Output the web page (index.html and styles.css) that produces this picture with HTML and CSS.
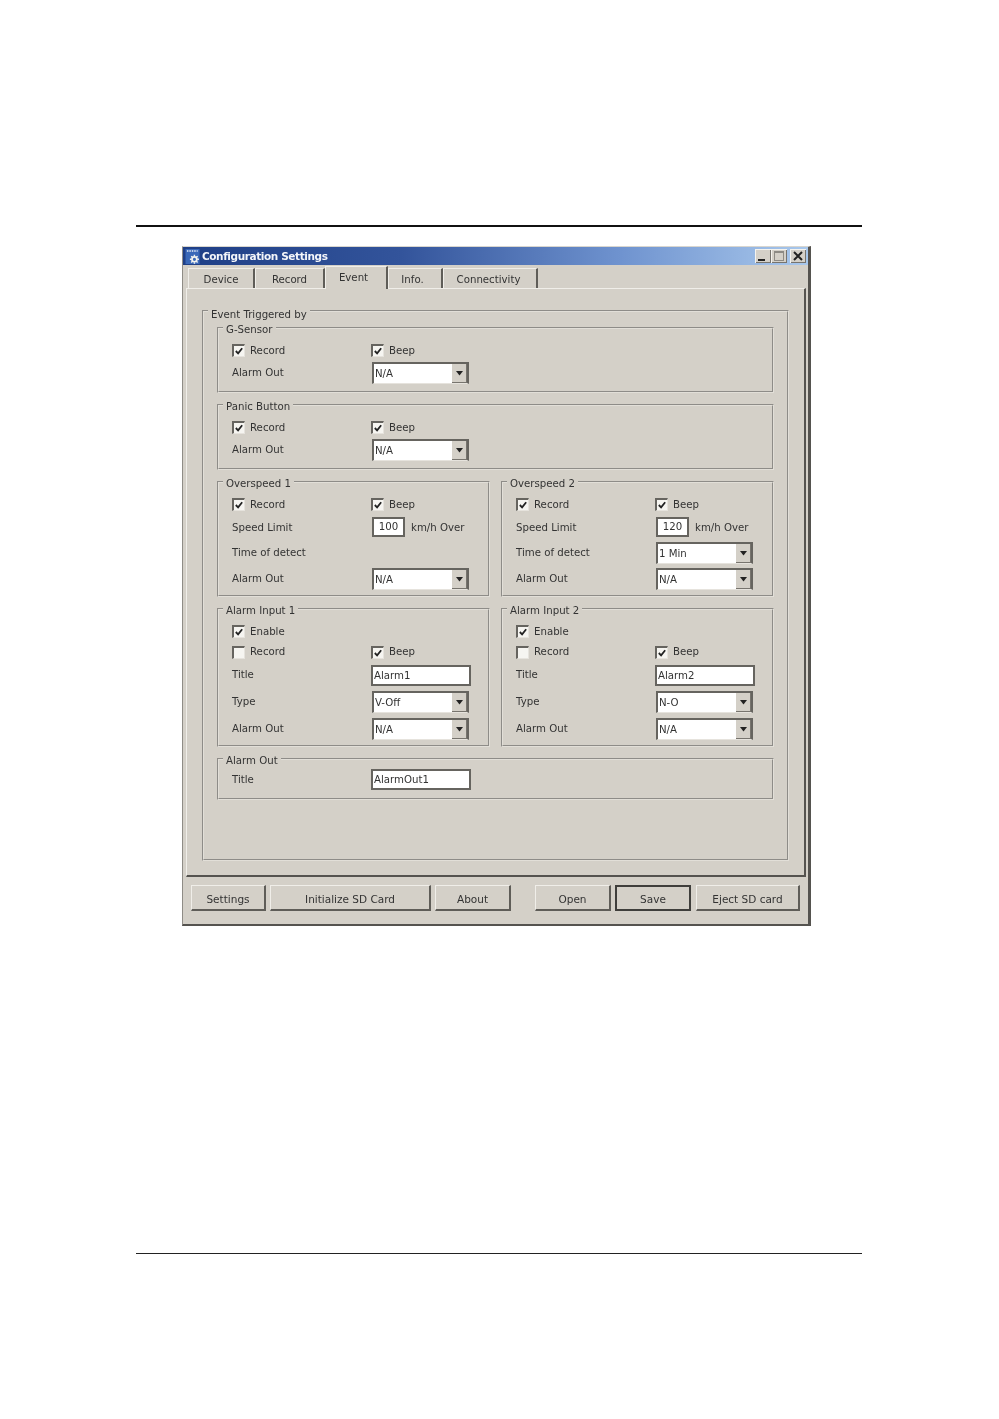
FILE: index.html
```html
<!DOCTYPE html>
<html lang="en">
<head>
<meta charset="utf-8">
<title>Configuration Settings</title>
<link rel="stylesheet" href="styles.css">
</head>
<body>
<svg class="defs" width="0" height="0" aria-hidden="true">
  <symbol id="tick" viewBox="0 0 11 11"><path d="M2 5.5 L4.5 8 L9 2.5" fill="none" stroke="#222" stroke-width="2"/></symbol>
  <symbol id="arrow" viewBox="0 0 9 5"><path d="M1 0 H8 L4.5 4.5 Z" fill="#222"/></symbol>
</svg>
<main class="page">
  <hr class="rule-top">
  <section class="window">
    <header class="titlebar">
      <svg class="app-icon" viewBox="0 0 16 16" width="16" height="15" aria-hidden="true">
        <rect x="0" y="0" width="15" height="16" fill="#3a68b8"/>
        <path d="M1.5 2H13" stroke="#e8eef8" stroke-width="1.6" stroke-dasharray="1.6 1"/>
        <circle cx="9.5" cy="11" r="2.6" fill="none" stroke="#f2f2ee" stroke-width="1.8"/>
        <path d="M9.5 6.2V8M9.5 14V15.8M4.7 11H6.5M12.5 11H14.3M6.1 7.6L7.4 8.9M11.6 13.1L12.9 14.4M12.9 7.6L11.6 8.9M7.4 13.1L6.1 14.4" stroke="#f2f2ee" stroke-width="1.5"/>
      </svg>
      <span class="title">Configuration Settings</span>
      <div class="win-controls">
        <span class="win-btn"><svg viewBox="0 0 16 14" width="16" height="14"><rect x="3" y="10" width="7" height="2" fill="#222"/></svg></span>
        <span class="win-btn win-max"><svg viewBox="0 0 16 14" width="16" height="14"><rect x="3.5" y="2.5" width="9" height="9" fill="none" stroke="#8d8a84"/><rect x="3" y="2" width="10" height="2" fill="#8d8a84"/></svg></span>
        <span class="win-btn win-close"><svg viewBox="0 0 16 14" width="16" height="14"><path d="M4 3L12 11M12 3L4 11" stroke="#222" stroke-width="2"/></svg></span>
      </div>
    </header>

    <nav class="tabs">
      <span class="tab tab-device">Device</span>
      <span class="tab tab-record">Record</span>
      <span class="tab tab-event is-active">Event</span>
      <span class="tab tab-info">Info.</span>
      <span class="tab tab-conn">Connectivity</span>
    </nav>

    <div class="panel">
      <fieldset class="outer">
        <legend>Event Triggered by</legend>

        <fieldset class="group group-wide">
          <legend>G-Sensor</legend>
          <div class="row h21">
            <label class="check"><span class="cb"><svg><use href="#tick"/></svg></span>Record</label>
            <label class="check"><span class="cb"><svg><use href="#tick"/></svg></span>Beep</label>
          </div>
          <div class="row h23">
            <span>Alarm Out</span>
            <div class="combo"><span class="combo-text">N/A</span><span class="combo-btn"><svg><use href="#arrow"/></svg></span></div>
          </div>
        </fieldset>

        <fieldset class="group group-wide">
          <legend>Panic Button</legend>
          <div class="row h21">
            <label class="check"><span class="cb"><svg><use href="#tick"/></svg></span>Record</label>
            <label class="check"><span class="cb"><svg><use href="#tick"/></svg></span>Beep</label>
          </div>
          <div class="row h23">
            <span>Alarm Out</span>
            <div class="combo"><span class="combo-text">N/A</span><span class="combo-btn"><svg><use href="#arrow"/></svg></span></div>
          </div>
        </fieldset>

        <div class="pair">
          <fieldset class="group">
            <legend>Overspeed 1</legend>
            <div class="row h21">
              <label class="check"><span class="cb"><svg><use href="#tick"/></svg></span>Record</label>
              <label class="check"><span class="cb"><svg><use href="#tick"/></svg></span>Beep</label>
            </div>
            <div class="row h25">
              <span>Speed Limit</span>
              <div class="speed"><span class="field field-speed">100</span><span>km/h Over</span></div>
            </div>
            <div class="row h25"><span>Time of detect</span></div>
            <div class="row h27">
              <span>Alarm Out</span>
              <div class="combo"><span class="combo-text">N/A</span><span class="combo-btn"><svg><use href="#arrow"/></svg></span></div>
            </div>
          </fieldset>

          <fieldset class="group">
            <legend>Overspeed 2</legend>
            <div class="row h21">
              <label class="check"><span class="cb"><svg><use href="#tick"/></svg></span>Record</label>
              <label class="check"><span class="cb"><svg><use href="#tick"/></svg></span>Beep</label>
            </div>
            <div class="row h25">
              <span>Speed Limit</span>
              <div class="speed"><span class="field field-speed">120</span><span>km/h Over</span></div>
            </div>
            <div class="row h25">
              <span>Time of detect</span>
              <div class="combo"><span class="combo-text">1 Min</span><span class="combo-btn"><svg><use href="#arrow"/></svg></span></div>
            </div>
            <div class="row h27">
              <span>Alarm Out</span>
              <div class="combo"><span class="combo-text">N/A</span><span class="combo-btn"><svg><use href="#arrow"/></svg></span></div>
            </div>
          </fieldset>
        </div>

        <div class="pair">
          <fieldset class="group">
            <legend>Alarm Input 1</legend>
            <div class="row h21">
              <label class="check"><span class="cb"><svg><use href="#tick"/></svg></span>Enable</label>
            </div>
            <div class="row h20">
              <label class="check"><span class="cb"></span>Record</label>
              <label class="check"><span class="cb"><svg><use href="#tick"/></svg></span>Beep</label>
            </div>
            <div class="row h26">
              <span>Title</span>
              <span class="field field-wide">Alarm1</span>
            </div>
            <div class="row h27">
              <span>Type</span>
              <div class="combo"><span class="combo-text">V-Off</span><span class="combo-btn"><svg><use href="#arrow"/></svg></span></div>
            </div>
            <div class="row h27">
              <span>Alarm Out</span>
              <div class="combo"><span class="combo-text">N/A</span><span class="combo-btn"><svg><use href="#arrow"/></svg></span></div>
            </div>
          </fieldset>

          <fieldset class="group">
            <legend>Alarm Input 2</legend>
            <div class="row h21">
              <label class="check"><span class="cb"><svg><use href="#tick"/></svg></span>Enable</label>
            </div>
            <div class="row h20">
              <label class="check"><span class="cb"></span>Record</label>
              <label class="check"><span class="cb"><svg><use href="#tick"/></svg></span>Beep</label>
            </div>
            <div class="row h26">
              <span>Title</span>
              <span class="field field-wide">Alarm2</span>
            </div>
            <div class="row h27">
              <span>Type</span>
              <div class="combo"><span class="combo-text">N-O</span><span class="combo-btn"><svg><use href="#arrow"/></svg></span></div>
            </div>
            <div class="row h27">
              <span>Alarm Out</span>
              <div class="combo"><span class="combo-text">N/A</span><span class="combo-btn"><svg><use href="#arrow"/></svg></span></div>
            </div>
          </fieldset>
        </div>

        <fieldset class="group group-last">
          <legend>Alarm Out</legend>
          <div class="row h21">
            <span>Title</span>
            <span class="field field-wide">AlarmOut1</span>
          </div>
        </fieldset>
      </fieldset>
    </div>

    <footer class="actions">
      <span class="btn btn-settings">Settings</span>
      <span class="btn btn-init">Initialize SD Card</span>
      <span class="btn btn-about">About</span>
      <span class="btn btn-open">Open</span>
      <span class="btn btn-save">Save</span>
      <span class="btn btn-eject">Eject SD card</span>
    </footer>
  </section>
  <hr class="rule-bottom">
</main>
</body>
</html>
```

FILE: styles.css
```css
* { box-sizing: border-box; }
html, body { margin: 0; padding: 0; background: #fff; }
body { height: 1419px; overflow: hidden; }
.defs { position: absolute; }

.page {
  width: 726px;
  margin-left: 136px;
  padding-top: 225px;
  font: 10.2px/12px "DejaVu Sans", sans-serif;
  color: #333;
}
.rule-top { margin: 0; height: 2px; border: 0; background: #111; }
.rule-bottom { margin: 327px 0 0; height: 1px; border: 0; background: #222; }

.window {
  width: 629px;
  height: 680px;
  margin: 19px 0 0 46px;
  background: #d4d0c8;
  border-style: solid;
  border-width: 1px 3px 2px 1px;
  border-color: #d9d6cf #55534f #55534f #8f8c86;
  filter: blur(0.45px);
}

/* title bar */
.titlebar {
  display: flex;
  align-items: center;
  height: 18px;
  padding: 0 2px 0 2px;
  background: linear-gradient(90deg, #1f3f86 0%, #33549b 35%, #6f93cf 70%, #a9c8ec 100%);
}
.app-icon { flex: none; }
.title {
  margin-left: 1px;
  font: bold 10.5px/18px "DejaVu Sans", sans-serif;
  letter-spacing: -0.4px;
  color: #f4f6fa;
}
.win-controls { display: flex; margin-left: auto; }
.win-btn {
  display: block;
  width: 16px;
  height: 14px;
  background: #d4d0c8;
  box-shadow: inset 1px 1px 0 #f5f3ee, inset -1px -1px 0 #77746e;
}
.win-btn svg { display: block; }
.win-close { margin-left: 3px; }

/* tabs */
.tabs {
  display: flex;
  align-items: flex-end;
  height: 23px;
  padding-left: 5px;
}
.tab {
  display: block;
  height: 20px;
  padding-top: 5px;
  text-align: center;
  border-top: 1px solid #f0eee9;
  border-left: 1px solid #f0eee9;
  border-right: 2px solid #5f5d58;
}
.tab-device { width: 67px; }
.tab-record { width: 70px; }
.tab-event { width: 63px; padding-right: 5px; }
.tab-info { width: 55px; padding-right: 5px; }
.tab-conn { width: 95px; padding-right: 3px; }
.tab.is-active {
  position: relative;
  top: 1px;
  height: 23px;
  padding-top: 5px;
  background: #d4d0c8;
}

/* panel */
.panel {
  width: 620px;
  height: 589px;
  margin-left: 3px;
  padding: 16px 15px 0 15px;
  border-style: solid;
  border-width: 1px 2px 2px 1px;
  border-color: #f0eee9 #55534f #55534f #f0eee9;
}

fieldset {
  margin: 0;
  padding: 0;
  min-width: 0;
  border: 2px groove #e2dfd8;
}
legend {
  height: 12px;
  padding: 0 3px;
  margin-left: -9px;
  line-height: 16px;
  white-space: nowrap;
}
.outer {
  height: 556px;
  padding: 5px 13px 0;
}
.outer > legend { line-height: 20px; }
.outer > * + * { margin-top: 6px; }
.outer > legend + * { margin-top: 0; }
.group { padding: 6px 8px 3px 13px; }
.group-wide { padding-bottom: 7px; }
.group-last { padding-top: 4px; padding-bottom: 8px; }
.pair {
  display: grid;
  grid-template-columns: 273px 273px;
  column-gap: 11px;
}

/* rows */
.row {
  display: grid;
  grid-template-columns: 140px 1fr;
  align-items: center;
}
.h20 { height: 20px; }
.h21 { height: 21px; }
.h23 { height: 23px; }
.h25 { height: 25px; }
.h26 { height: 26px; }
.h27 { height: 27px; }

.check { display: flex; align-items: center; gap: 5px; }
.check + .check { margin-left: -1px; }
.cb {
  flex: none;
  width: 13px;
  height: 13px;
  background: #f6f5f1;
  border-top: 2px solid #66645f;
  border-left: 2px solid #66645f;
  border-right: 1px solid #e6e3dd;
  border-bottom: 1px solid #e6e3dd;
}
.cb svg { display: block; width: 10px; height: 10px; }

.combo {
  display: flex;
  width: 97px;
  height: 22px;
  background: #fff;
  border-top: 2px solid #66645f;
  border-left: 2px solid #66645f;
  border-right: 2px solid #66645f;
  border-bottom: 1px solid #e6e3dd;
}
.combo-text { flex: 1; padding: 4px 0 0 1px; }
.combo-btn {
  flex: none;
  display: flex;
  align-items: center;
  justify-content: center;
  width: 15px;
  background: #d4d0c8;
  box-shadow: inset -1px -1px 0 #77746e;
}
.combo-btn svg { display: block; width: 9px; height: 5px; }

.field {
  display: block;
  height: 21px;
  background: #fff;
  border: 2px solid #66645f;
  padding: 3px 0 0 1px;
}
.field-wide { width: 100px; margin-left: -1px; }
.speed { display: flex; align-items: center; gap: 6px; }
.field-speed { width: 33px; height: 20px; margin-bottom: 2px; text-align: center; padding: 2px 0 0; }

/* footer buttons */
.actions {
  display: flex;
  padding: 8px 0 0 8px;
}
.btn {
  display: block;
  height: 26px;
  line-height: 26px;
  text-align: center;
  font-size: 10.5px;
  background: #d4d0c8;
  border-style: solid;
  border-width: 1px 2px 2px 1px;
  border-color: #f0eee9 #5f5d58 #5f5d58 #f0eee9;
}
.btn-settings { width: 75px; }
.btn-init { width: 161px; margin-left: 4px; }
.btn-about { width: 76px; margin-left: 4px; }
.btn-open { width: 76px; margin-left: 24px; }
.btn-save { width: 76px; margin-left: 4px; border: 2px solid #3f3e3b; line-height: 24px; }
.btn-eject { width: 104px; margin-left: 5px; }
```
